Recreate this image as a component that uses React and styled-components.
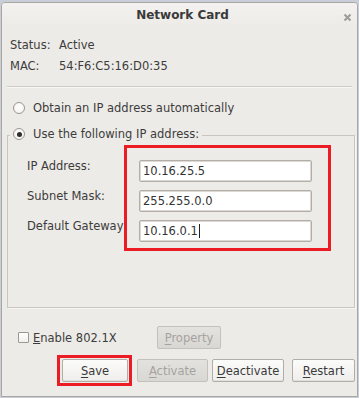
import React from "react";
import styled, { createGlobalStyle } from "styled-components";

const Global = createGlobalStyle`
  html, body { margin: 0; padding: 0; }
  body {
    background: #c9ced8;
    font-family: "DejaVu Sans", "Liberation Sans", sans-serif;
    font-size: 11.5px;
    color: #3c3c3c;
  }
  * { box-sizing: border-box; }
`;

const Window = styled.div`
  margin: 2px 1px 0 1px;
  height: 395px;
  border: 1px solid #a9a7a2;
  border-radius: 4px 4px 0 0;
  background: #edebe7;
  display: flex;
  flex-direction: column;
  overflow: hidden;
`;

const TitleBar = styled.div`
  height: 24px;
  flex: 0 0 24px;
  display: flex;
  align-items: center;
  justify-content: center;
  position: relative;
  background: linear-gradient(#f3f2f0, #edebe7);
`;

const Title = styled.div`
  font-weight: bold;
  font-size: 12px;
  color: #3a3a3a;
  padding-left: 6px;
`;

const Close = styled.div`
  position: absolute;
  right: 5px;
  top: 8px;
  width: 9px;
  height: 9px;
`;

const Content = styled.div`
  padding: 7px 5px 0 5px;
  display: flex;
  flex-direction: column;
`;

const InfoRow = styled.div`
  display: flex;
  height: 21px;
  align-items: center;
  padding-left: 3px;
`;

const InfoKey = styled.span`
  width: 49px;
`;

const Separator = styled.div`
  margin-top: 10px;
  height: 1px;
  background: #cfccc6;
  border-bottom: 1px solid #f8f7f5;
  box-sizing: content-box;
`;

const RadioRow = styled.label`
  display: flex;
  align-items: center;
  gap: 8px;
  height: 20px;
  margin-top: 10px;
  padding-left: 6px;
`;

const Radio = styled.span`
  width: 12px;
  height: 12px;
  border-radius: 50%;
  border: 1px solid #9b9892;
  background: radial-gradient(circle at 50% 40%, #ffffff, #f1efec);
  display: flex;
  align-items: center;
  justify-content: center;
  flex: 0 0 12px;
  &::after {
    content: "";
    width: 5px;
    height: 5px;
    border-radius: 50%;
    background: ${(p) => (p.$checked ? "#2e2e2e" : "transparent")};
  }
`;

const Frame = styled.fieldset`
  margin: 8px -3px 0 0;
  padding: 0 0 56px 0;
  border: 1px solid #c9c6c0;
  box-shadow: 1px 1px 0 #f7f6f4;
  display: grid;
  grid-template-columns: 116px 207px;
  min-width: 0;
`;

const Legend = styled.legend`
  margin-left: 2px;
  padding: 0 3px 2px 3px;
  height: 18px;
  display: flex;
  align-items: center;
  gap: 8px;
  line-height: 16px;
`;

const Labels = styled.div`
  margin-top: 1px;
  padding: 6px 0 0 19px;
  display: flex;
  flex-direction: column;
`;

const FieldLabel = styled.div`
  height: 30px;
  line-height: 30px;
  white-space: nowrap;
`;

const Highlight = styled.div`
  margin-top: 1px;
  border: 3px solid #ec1c24;
  padding: 12px 16px 6px 12px;
  display: flex;
  flex-direction: column;
  gap: 8px;
`;

const Field = styled.div`
  height: 22px;
  width: 173px;
  background: #ffffff;
  border: 1px solid #b3afa8;
  border-radius: 2px;
  box-shadow: inset 0 0 0 1px #dcd9d4;
  padding-left: 3px;
  display: flex;
  align-items: center;
  color: #333;
`;

const Caret = styled.span`
  display: inline-block;
  width: 1px;
  height: 14px;
  background: #222;
  margin-left: 1px;
`;

const OptionRow = styled.div`
  margin-top: 18px;
  display: flex;
  align-items: center;
  height: 23px;
  padding-left: 16px;
`;

const CheckLabel = styled.label`
  flex: 0 0 139px;
  display: flex;
  align-items: center;
  gap: 4px;
`;

const CheckBox = styled.span`
  width: 11px;
  height: 11px;
  border: 1px solid #9b9892;
  border-radius: 1px;
  background: linear-gradient(#ffffff, #f2f0ed);
`;

const Button = styled.button`
  font-family: inherit;
  font-size: 11.5px;
  height: 23px;
  width: ${(p) => p.$w}px;
  padding: 0;
  border-radius: 2px;
  border: 1px solid ${(p) => (p.disabled ? "#c4c1bb" : "#b2aea7")};
  background: ${(p) =>
    p.disabled
      ? "linear-gradient(#e4e2de, #d9d7d3)"
      : "linear-gradient(#fbfbfa, #efeeec)"};
  color: ${(p) => (p.disabled ? "#a6a39e" : "#3a3a3a")};
  box-shadow: ${(p) => (p.disabled ? "none" : "inset 0 -1px 0 #e2e0dc")};
  u { text-decoration-thickness: 1px; text-underline-offset: 2px; }
`;

const ButtonRow = styled.div`
  margin-top: 6px;
  display: flex;
  align-items: center;
  justify-content: flex-end;
  padding-right: 2px;
`;

const SaveMark = styled.div`
  border: 3px solid #ec1c24;
  padding: 1px 1px 1px 2px;
  display: flex;
  margin-right: 5px;
`;

const Spacer = styled.div`
  width: ${(p) => p.$w}px;
`;

export default function App() {
  return (
    <>
      <Global />
      <Window>
        <TitleBar>
          <Title>Network Card</Title>
          <Close>
            <svg width="9" height="9" viewBox="0 0 9 9">
              <path d="M1.5 1.5 L7.5 7.5 M7.5 1.5 L1.5 7.5" stroke="#9e9c98" strokeWidth="2" />
            </svg>
          </Close>
        </TitleBar>
        <Content>
          <InfoRow>
            <InfoKey>Status:</InfoKey>
            <span>Active</span>
          </InfoRow>
          <InfoRow>
            <InfoKey>MAC:</InfoKey>
            <span>54:F6:C5:16:D0:35</span>
          </InfoRow>
          <Separator />
          <RadioRow>
            <Radio />
            <span>Obtain an IP address automatically</span>
          </RadioRow>
          <Frame>
            <Legend>
              <Radio $checked />
              <span>Use the following IP address:</span>
            </Legend>
            <Labels>
              <FieldLabel>IP Address:</FieldLabel>
              <FieldLabel>Subnet Mask:</FieldLabel>
              <FieldLabel>Default Gateway</FieldLabel>
            </Labels>
            <Highlight>
              <Field>10.16.25.5</Field>
              <Field>255.255.0.0</Field>
              <Field>
                10.16.0.1
                <Caret />
              </Field>
            </Highlight>
          </Frame>
        </Content>
        <OptionRow>
          <CheckLabel>
            <CheckBox />
            <span>
              <u>E</u>nable 802.1X
            </span>
          </CheckLabel>
          <Button disabled $w={64}>
            <u>P</u>roperty
          </Button>
        </OptionRow>
        <ButtonRow>
          <SaveMark>
            <Button $w={66}>
              <u>S</u>ave
            </Button>
          </SaveMark>
          <Button disabled $w={71}>
            <u>A</u>ctivate
          </Button>
          <Spacer $w={4} />
          <Button $w={72}>
            <u>D</u>eactivate
          </Button>
          <Spacer $w={8} />
          <Button $w={63}>
            <u>R</u>estart
          </Button>
        </ButtonRow>
      </Window>
    </>
  );
}
